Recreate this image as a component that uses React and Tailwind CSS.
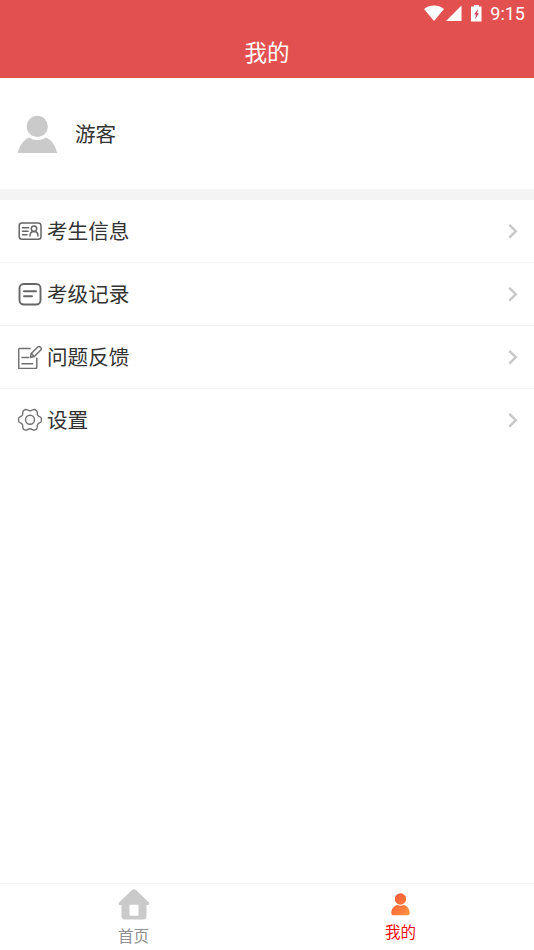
function StatusBar() {
  return (
    <div className="flex h-[27px] items-center justify-end pr-[9px]">
      <svg width="20" height="17" viewBox="0 0 20 17" fill="#fff">
        <path d="M0 4C6-.6 14-.6 20 4L10 16Z" />
      </svg>
      <svg className="ml-0.5" width="16" height="17" viewBox="0 0 16 17" fill="#fff">
        <path d="M15.5 .5v15.500H0Z" />
      </svg>
      <svg className="ml-[9px]" width="11" height="17" viewBox="0 0 11 17">
        <path d="M3 0h5v1.500h2.500v15H0v-15h3Z" fill="#fff" />
        <path d="M7 4L3 9.500h2l-.8 4.500L8 8.300H6.200Z" fill="#d84360" />
      </svg>
      <span className="ml-[8px] font-[Roboto,sans-serif] text-[18px] leading-[27px] text-white">9:15</span>
    </div>
  );
}

function InfoIcon() {
  return (
    <svg width="24" height="24" viewBox="0 0 24 24" fill="none" stroke="#666" strokeWidth="1.5" strokeLinecap="round">
      <rect x="1.2" y="3.9" width="21.8" height="16.4" rx="2.8" />
      <path d="M4.5 8.7h6.200M4.5 12.200h5.500M4.500 15.700h4.500" />
      <circle cx="16" cy="9.800" r="2.700" />
      <path d="M12 17c0-2.800 1.500-4.500 4-4.500s4 1.700 4 4.500" />
    </svg>
  );
}

function RecordIcon() {
  return (
    <svg width="24" height="24" viewBox="0 0 24 24" fill="none" stroke="#666" strokeWidth="1.9" strokeLinecap="round">
      <rect x="1.5" y="2" width="21" height="20.5" rx="4.2" />
      <path d="M6 9.3h12M6 14.2h8" />
    </svg>
  );
}

function FeedbackIcon() {
  return (
    <svg width="24" height="24" viewBox="0 0 24 24" fill="none" stroke="#707070" strokeWidth="1.5" strokeLinecap="round" strokeLinejoin="round">
      <path d="M12 3.500H1.500c-.5 0-.8.3-.8.8v18.400c0 .5.3.8.8.8h16c.8 0 1.300-.5 1.300-1.300v-9" />
      <path d="M4 12.500h6.500M4 18.700h10.500" />
      <path d="M12.300 12.500l1-4 6.500-6.500c1.600-1.500 4.600 1.200 3 3l-6.500 6.500Z" />
      <path d="M13.300 8.500l3 3" />
    </svg>
  );
}

function SettingsIcon() {
  return (
    <svg width="24" height="24" viewBox="0 0 24 24" fill="none" stroke="#707070" strokeWidth="1.4" strokeLinejoin="round">
      <path d="M7.500 1.500C9 1 9.900 2.800 12 2.800s3-1.800 4.500-1.300c1.200.4 2.500 1.100 2.700 2.300.2 1.500-.2 2.300.5 3.500.8 1.400 3.400 1.400 3.600 2.800.2 1.200.2 2.200 0 3.400-.2 1.400-2.800 1.400-3.600 2.800-.7 1.200-.3 2-.5 3.500-.2 1.200-1.500 1.900-2.700 2.300C15 22.600 14.100 20.800 12 20.800s-3 1.800-4.500 1.300c-1.200-.4-2.500-1.100-2.700-2.300-.2-1.500.2-2.300-.5-3.500-.8-1.400-3.400-1.400-3.600-2.800-.2-1.200-.2-2.200 0-3.400.2-1.400 2.800-1.400 3.600-2.800.7-1.200.3-2 .5-3.500.2-1.200 1.500-1.900 2.700-2.300Z" />
      <circle cx="12" cy="11.8" r="4.5" />
    </svg>
  );
}

const menu = [
  { label: "考生信息", Icon: InfoIcon },
  { label: "考级记录", Icon: RecordIcon },
  { label: "问题反馈", Icon: FeedbackIcon },
  { label: "设置", Icon: SettingsIcon },
];

function MenuRow({ label, Icon }) {
  return (
    <li className="flex h-[63px] items-center border-b border-[#f3f3f3] pl-[18px] pr-4 last:border-transparent">
      <Icon />
      <span className="ml-[5px] pb-[2px] text-[20.6px] leading-[30px] text-[#333]">{label}</span>
      <svg className="ml-auto" width="10" height="16" viewBox="0 0 10 16" fill="none" stroke="#c8c8c8" strokeWidth="2.5">
        <path d="M1.3 1.8L7.8 8.2l-6.5 6.4" />
      </svg>
    </li>
  );
}

export default function App() {
  return (
    <div className="flex h-[950px] w-full flex-col bg-white font-['Noto_Sans_CJK_SC',sans-serif]">
      <header className="h-[78px] bg-[#e35050]">
        <StatusBar />
        <h1 className="text-center text-[22.5px] leading-[48px] text-white">我的</h1>
      </header>

      <section className="flex h-[111px] items-center pl-[18px]">
        <svg width="39" height="38" viewBox="0 0 39 38" fill="#cacaca">
          <circle cx="19.3" cy="11.4" r="10.6" />
          <path d="M0 38C1.2 30.500 5.500 25 11 22.500c5 3.400 12 3.400 17 0 5.500 2.500 9.800 8 11 15.500Z" />
        </svg>
        <span className="ml-[18px] pb-[2px] text-[20.6px] leading-[30px] text-[#333]">游客</span>
      </section>
      <div className="h-[11px] bg-[#f4f4f4]" />

      <ul>
        {menu.map((item) => (
          <MenuRow key={item.label} label={item.label} Icon={item.Icon} />
        ))}
      </ul>

      <nav className="mt-auto flex h-[67px] border-t border-[#f3f3f3] text-[15.5px] leading-[22px]">
        <div className="flex flex-1 flex-col items-center pt-[5px] text-[#8f8f8f]">
          <svg width="32" height="31" viewBox="0 0 32 31">
            <path
              d="M14.3.8c1-.8 2.400-.8 3.400 0L31 13.500c.8.8.3 2.500-1 2.500h-1.500v11.500c0 1.700-1.300 3-3 3H6.500c-1.700 0-3-1.300-3-3V16H2c-1.300 0-1.800-1.700-1-2.500Z"
              fill="#cacaca"
            />
            <rect x="11.500" y="15.700" width="9" height="11" rx="1" fill="#fff" />
          </svg>
          <span className="mt-1">首页</span>
        </div>
        <div className="flex flex-1 flex-col items-center pt-[9px] text-[#f00f14]">
          <svg width="20" height="23" viewBox="0 0 20 23" fill="url(#mine)">
            <defs>
              <linearGradient id="mine" gradientUnits="userSpaceOnUse" x1="2" y1="4" x2="19" y2="20">
                <stop offset="0" stopColor="#ff5a36" />
                <stop offset="1" stopColor="#ff9340" />
              </linearGradient>
            </defs>
            <circle cx="9.5" cy="6" r="5.7" />
            <path d="M.3 20c0-4 2.700-7.500 6.200-8 2 1 4.200 1 6.200 0 3.500.5 6 4 6 8 0 1.500-1 2.300-2.300 2.300H2.600C1.300 22.300.3 21.500.3 20Z" />
          </svg>
          <span className="mt-1">我的</span>
        </div>
      </nav>
    </div>
  );
}
